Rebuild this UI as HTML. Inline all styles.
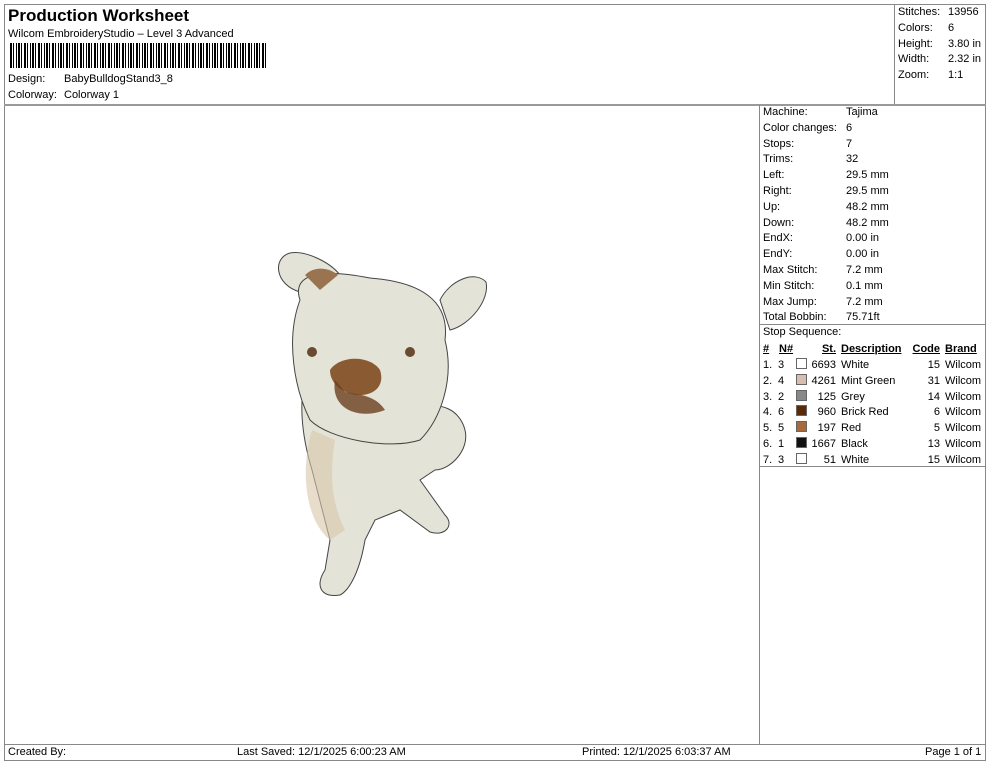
<!DOCTYPE html>
<html><head><meta charset="utf-8"><style>
body{margin:0;width:990px;height:762px;background:#fff;font-family:"Liberation Sans",Arial,sans-serif;font-size:11px;color:#000;position:relative;overflow:hidden}
.a{position:absolute;white-space:nowrap}
.ln{position:absolute;background:#888}
.sw{position:absolute;width:9px;height:9px;border:1px solid #666}
.r{text-align:right}
</style></head><body>
<div class="ln" style="left:4px;top:4px;width:982px;height:1px"></div>
<div class="ln" style="left:4px;top:4px;width:1px;height:757px"></div>
<div class="ln" style="left:985px;top:4px;width:1px;height:757px"></div>
<div class="ln" style="left:4px;top:760px;width:982px;height:1px"></div>
<div class="ln" style="left:4px;top:104px;width:982px;height:2px;background:#999"></div>
<div class="ln" style="left:894px;top:4px;width:1px;height:100px"></div>
<div class="ln" style="left:759px;top:105px;width:1px;height:639px"></div>
<div class="ln" style="left:759px;top:324px;width:227px;height:1px"></div>
<div class="ln" style="left:759px;top:466px;width:227px;height:1px"></div>
<div class="ln" style="left:4px;top:744px;width:982px;height:1px"></div>

<div class="a" style="left:8px;top:6px;font-size:17px;font-weight:bold">Production Worksheet</div>
<div class="a" style="left:8px;top:28px">Wilcom EmbroideryStudio – Level 3 Advanced</div>
<div class="a" style="left:10px;top:43px;width:258px;height:25px;background:repeating-linear-gradient(90deg,#000 0 2px,#fff 2px 3px,#000 3px 4px,#fff 4px 6px,#000 6px 7px,#fff 7px 8px,#000 8px 10px,#fff 10px 11px,#000 11px 12px,#fff 12px 14px)"></div>
<div class="a" style="left:8px;top:73px">Design:</div><div class="a" style="left:64px;top:73px">BabyBulldogStand3_8</div>
<div class="a" style="left:8px;top:89px">Colorway:</div><div class="a" style="left:64px;top:89px">Colorway 1</div>

<div class="a" style="left:898px;top:5px;line-height:15.8px">Stitches:<br>Colors:<br>Height:<br>Width:<br>Zoom:</div>
<div class="a" style="left:948px;top:5px;line-height:15.8px">13956<br>6<br>3.80 in<br>2.32 in<br>1:1</div>

<div class="a" style="left:763px;top:105px;line-height:15.8px">Machine:<br>Color changes:<br>Stops:<br>Trims:<br>Left:<br>Right:<br>Up:<br>Down:<br>EndX:<br>EndY:<br>Max Stitch:<br>Min Stitch:<br>Max Jump:<br>Total Bobbin:</div>
<div class="a" style="left:846px;top:105px;line-height:15.8px">Tajima<br>6<br>7<br>32<br>29.5 mm<br>29.5 mm<br>48.2 mm<br>48.2 mm<br>0.00 in<br>0.00 in<br>7.2 mm<br>0.1 mm<br>7.2 mm<br>75.71ft</div>

<div class="a" style="left:763px;top:326px">Stop Sequence:</div>
<div class="a" style="left:763px;top:342px;line-height:15.8px;font-weight:bold;text-decoration:underline">#</div>
<div class="a" style="left:779px;top:342px;line-height:15.8px;font-weight:bold;text-decoration:underline">N#</div>
<div class="a r" style="left:800px;width:36px;top:342px;line-height:15.8px;font-weight:bold;text-decoration:underline">St.</div>
<div class="a" style="left:841px;top:342px;line-height:15.8px;font-weight:bold;text-decoration:underline">Description</div>
<div class="a r" style="left:900px;width:40px;top:342px;line-height:15.8px;font-weight:bold;text-decoration:underline">Code</div>
<div class="a" style="left:945px;top:342px;line-height:15.8px;font-weight:bold;text-decoration:underline">Brand</div>

<div class="a" style="left:763px;top:358px;line-height:15.8px">1.<br>2.<br>3.<br>4.<br>5.<br>6.<br>7.</div>
<div class="a" style="left:778px;top:358px;line-height:15.8px">3<br>4<br>2<br>6<br>5<br>1<br>3</div>
<div class="a r" style="left:800px;width:36px;top:358px;line-height:15.8px">6693<br>4261<br>125<br>960<br>197<br>1667<br>51</div>
<div class="a" style="left:841px;top:358px;line-height:15.8px">White<br>Mint Green<br>Grey<br>Brick Red<br>Red<br>Black<br>White</div>
<div class="a r" style="left:900px;width:40px;top:358px;line-height:15.8px">15<br>31<br>14<br>6<br>5<br>13<br>15</div>
<div class="a" style="left:945px;top:358px;line-height:15.8px">Wilcom<br>Wilcom<br>Wilcom<br>Wilcom<br>Wilcom<br>Wilcom<br>Wilcom</div>
<div class="sw" style="left:796px;top:358px;background:#fff"></div>
<div class="sw" style="left:796px;top:374px;background:#d9bcb0"></div>
<div class="sw" style="left:796px;top:390px;background:#888"></div>
<div class="sw" style="left:796px;top:405px;background:#5a2a08"></div>
<div class="sw" style="left:796px;top:421px;background:#a86a3a"></div>
<div class="sw" style="left:796px;top:437px;background:#111"></div>
<div class="sw" style="left:796px;top:453px;background:#fff"></div>

<svg class="a" style="left:0;top:0" width="760" height="740">
<g stroke="#444" stroke-width="1" fill="#e4e3d8">
<path d="M300 292 C275 285 272 258 290 253 C305 250 330 262 340 275 Z"/>
<path d="M440 300 C450 280 475 270 486 282 C490 300 470 325 450 330 Z"/>
<path d="M312 470 C300 430 300 400 305 380 L420 410 C440 400 460 410 465 430 C470 450 450 470 435 470 L420 480 L445 515 C455 525 445 537 430 532 L400 510 L375 520 L365 540 C360 570 350 590 340 595 C320 598 315 585 325 570 L330 540 Z"/>
<path d="M300 300 C290 270 330 270 370 278 C420 282 450 300 445 340 C455 380 440 420 420 440 C390 450 330 440 310 420 C295 390 285 340 300 300 Z"/>
</g>
<path d="M312 430 C300 470 305 520 330 540 L345 530 C330 500 330 470 335 440 Z" fill="#d8c7a8" opacity=".6"/>
<path d="M330 370 C340 355 370 355 380 370 C385 385 375 395 360 395 C345 395 330 385 330 370 Z" fill="#8a5a32"/>
<path d="M335 380 C330 410 360 420 385 410 C375 395 360 395 345 392 Z" fill="#6a3e1e" opacity=".8"/>
<circle cx="312" cy="352" r="5" fill="#6a4a30"/><circle cx="410" cy="352" r="5" fill="#6a4a30"/>
<path d="M305 275 C315 265 330 268 338 275 L320 290 Z" fill="#9a7450"/>
</svg>

<div class="a" style="left:8px;top:746px">Created By:</div>
<div class="a" style="left:237px;top:746px">Last Saved: 12/1/2025 6:00:23 AM</div>
<div class="a" style="left:582px;top:746px">Printed: 12/1/2025 6:03:37 AM</div>
<div class="a" style="left:925px;top:746px">Page 1 of 1</div>
</body></html>
